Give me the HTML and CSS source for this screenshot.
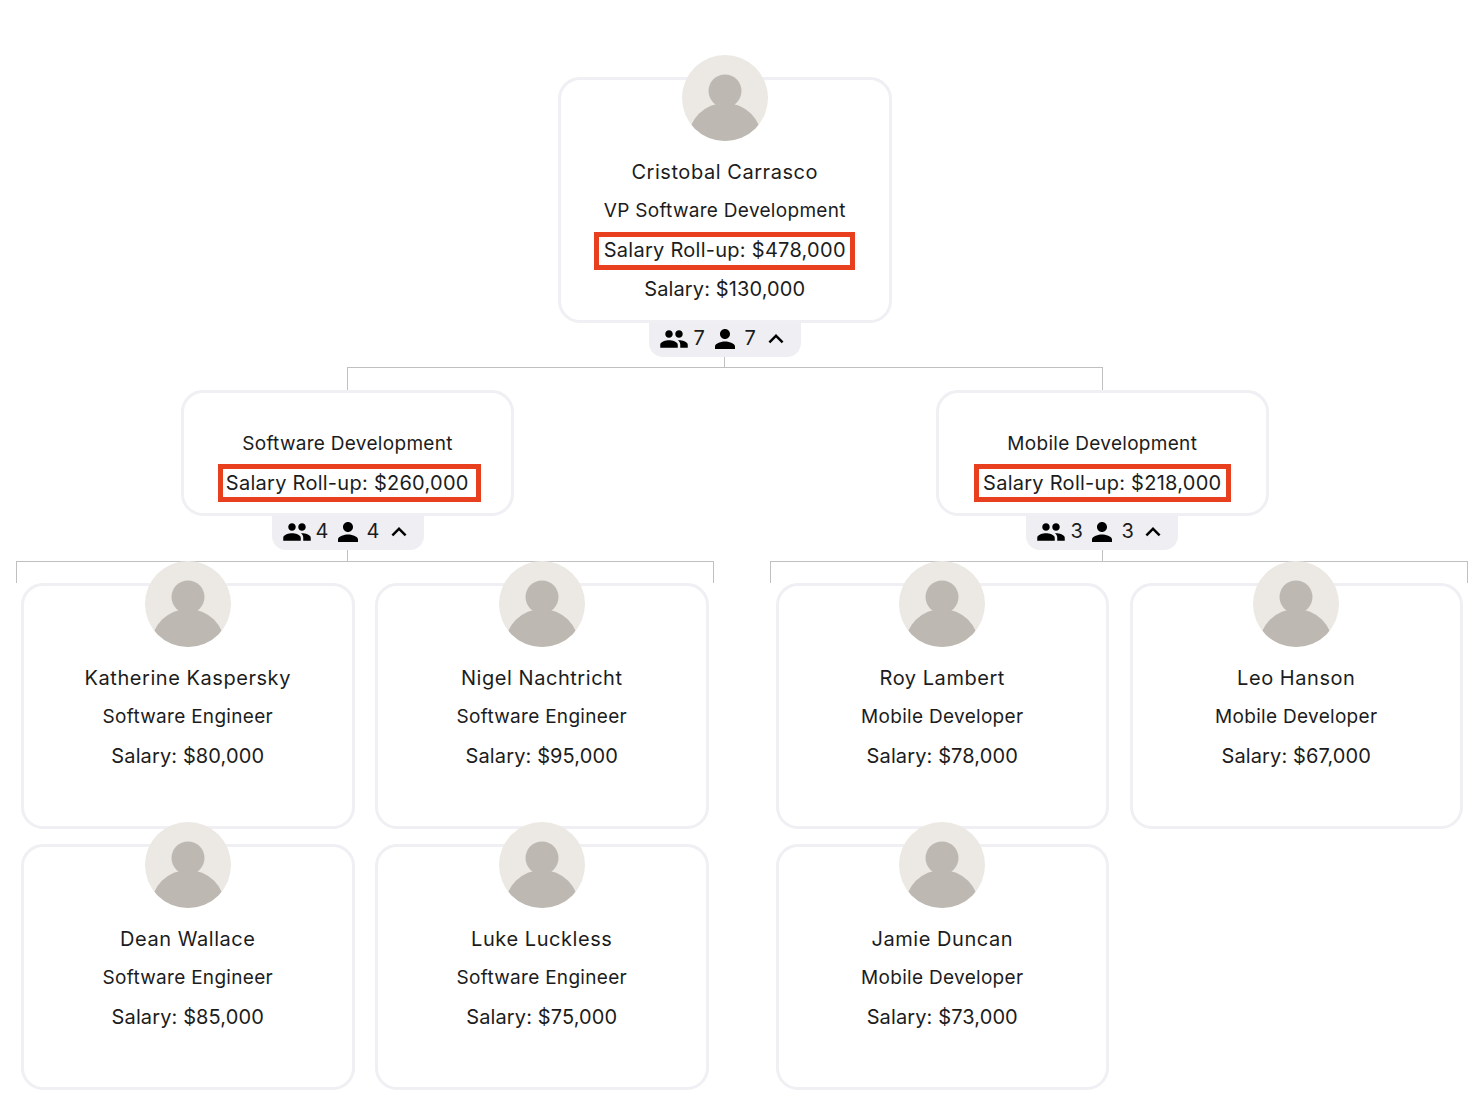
FILE: index.html
```html
<!DOCTYPE html>
<html lang="en">
<head>
<meta charset="utf-8">
<title>Org chart</title>
<link rel="stylesheet" href="styles.css">
</head>
<body>
<svg class="defs" width="0" height="0" aria-hidden="true">
  <symbol id="avatar" viewBox="0 0 86 86">
    <circle cx="43" cy="43" r="43" fill="#ece9e4"/>
    <clipPath id="avatar-clip"><circle cx="43" cy="43" r="43"/></clipPath>
    <g clip-path="url(#avatar-clip)" fill="#bdb9b2">
      <circle cx="43" cy="36" r="16.5"/>
      <circle cx="43" cy="85" r="37"/>
    </g>
  </symbol>
  <symbol id="group" viewBox="0 0 24 24"><path d="M16 11c1.66 0 2.99-1.34 2.99-3S17.66 5 16 5c-1.66 0-3 1.34-3 3s1.34 3 3 3zm-8 0c1.66 0 2.99-1.34 2.99-3S9.66 5 8 5C6.34 5 5 6.34 5 8s1.34 3 3 3zm0 2c-2.33 0-7 1.17-7 3.5V19h14v-2.5c0-2.33-4.67-3.5-7-3.5zm8 0c-.29 0-.62.02-.97.05 1.16.84 1.97 1.97 1.97 3.45V19h6v-2.5c0-2.33-4.67-3.5-7-3.5z"/></symbol>
  <symbol id="person" viewBox="0 0 24 24"><path d="M12 12c2.21 0 4-1.79 4-4s-1.79-4-4-4-4 1.79-4 4 1.79 4 4 4zm0 2c-2.67 0-8 1.34-8 4v2h16v-2c0-2.66-5.33-4-8-4z"/></symbol>
  <symbol id="chevron" viewBox="0 0 24 24"><path d="M12 8l-6 6 1.41 1.41L12 10.83l4.59 4.58L18 14z"/></symbol>
</svg>

<main class="chart">
  <section class="node node-root">
    <article class="card card-person">
      <svg class="avatar"><use href="#avatar"/></svg>
      <div class="lines">
        <div class="name">Cristobal Carrasco</div>
        <div class="role">VP Software Development</div>
        <div class="rollup">Salary Roll-up: $478,000</div>
        <div class="salary">Salary: $130,000</div>
      </div>
    </article>
    <div class="pill">
      <svg class="icon"><use href="#group"/></svg><span class="count">7</span>
      <svg class="icon"><use href="#person"/></svg><span class="count">7</span>
      <svg class="icon"><use href="#chevron"/></svg>
    </div>
    <div class="stem stem-root"></div>
  </section>
  <div class="bracket bracket-root"></div>

  <div class="branches">
    <section class="branch">
      <div class="node">
        <article class="card card-dept">
          <div class="lines">
            <div class="role">Software Development</div>
            <div class="rollup rollup-offset">Salary Roll-up: $260,000</div>
          </div>
        </article>
        <div class="pill">
          <svg class="icon"><use href="#group"/></svg><span class="count">4</span>
          <svg class="icon"><use href="#person"/></svg><span class="count">4</span>
          <svg class="icon"><use href="#chevron"/></svg>
        </div>
        <div class="stem"></div>
      </div>
      <div class="bracket"></div>
      <div class="team">
        <article class="card card-person">
          <svg class="avatar"><use href="#avatar"/></svg>
          <div class="lines">
            <div class="name">Katherine Kaspersky</div>
            <div class="role">Software Engineer</div>
            <div class="salary">Salary: $80,000</div>
          </div>
        </article>
        <article class="card card-person">
          <svg class="avatar"><use href="#avatar"/></svg>
          <div class="lines">
            <div class="name">Nigel Nachtricht</div>
            <div class="role">Software Engineer</div>
            <div class="salary">Salary: $95,000</div>
          </div>
        </article>
        <article class="card card-person">
          <svg class="avatar"><use href="#avatar"/></svg>
          <div class="lines">
            <div class="name">Dean Wallace</div>
            <div class="role">Software Engineer</div>
            <div class="salary">Salary: $85,000</div>
          </div>
        </article>
        <article class="card card-person">
          <svg class="avatar"><use href="#avatar"/></svg>
          <div class="lines">
            <div class="name">Luke Luckless</div>
            <div class="role">Software Engineer</div>
            <div class="salary">Salary: $75,000</div>
          </div>
        </article>
      </div>
    </section>

    <section class="branch">
      <div class="node">
        <article class="card card-dept">
          <div class="lines">
            <div class="role">Mobile Development</div>
            <div class="rollup">Salary Roll-up: $218,000</div>
          </div>
        </article>
        <div class="pill">
          <svg class="icon"><use href="#group"/></svg><span class="count">3</span>
          <svg class="icon"><use href="#person"/></svg><span class="count">3</span>
          <svg class="icon"><use href="#chevron"/></svg>
        </div>
        <div class="stem"></div>
      </div>
      <div class="bracket"></div>
      <div class="team team-right">
        <article class="card card-person">
          <svg class="avatar"><use href="#avatar"/></svg>
          <div class="lines">
            <div class="name">Roy Lambert</div>
            <div class="role">Mobile Developer</div>
            <div class="salary">Salary: $78,000</div>
          </div>
        </article>
        <article class="card card-person">
          <svg class="avatar"><use href="#avatar"/></svg>
          <div class="lines">
            <div class="name">Leo Hanson</div>
            <div class="role">Mobile Developer</div>
            <div class="salary">Salary: $67,000</div>
          </div>
        </article>
        <article class="card card-person">
          <svg class="avatar"><use href="#avatar"/></svg>
          <div class="lines">
            <div class="name">Jamie Duncan</div>
            <div class="role">Mobile Developer</div>
            <div class="salary">Salary: $73,000</div>
          </div>
        </article>
      </div>
    </section>
  </div>
</main>
</body>
</html>
```

FILE: styles.css
```css
* { box-sizing: border-box; }

html, body { margin: 0; background: #fff; }

body {
  font-family: "Inter", "Noto Sans", sans-serif;
  color: #1c1c1c;
  overflow: hidden;
}

.defs { position: absolute; }

.chart {
  width: 1482px;
  height: 1114px;
  padding-top: 77px;
  display: flex;
  flex-direction: column;
}

.node {
  width: 333.5px;
  margin-left: 164.75px;
  display: flex;
  flex-direction: column;
  align-items: center;
}

.node-root { margin-left: 558px; }

.branch:last-child .node { margin-left: 165.5px; }

.card {
  width: 333.5px;
  border: 3px solid #efeff4;
  border-radius: 22px;
  background: #fff;
  display: flex;
  flex-direction: column;
  align-items: center;
}

.card-person { height: 246px; }
.card-dept { height: 126px; padding-top: 36px; }

.avatar {
  display: block;
  width: 86px;
  height: 86px;
  margin-top: -25px;
  margin-bottom: 16px;
  flex: none;
}

.lines {
  display: flex;
  flex-direction: column;
  align-items: center;
  gap: 9px;
}

.name, .salary, .rollup {
  font-size: 20px;
  line-height: 30px;
  height: 30px;
  white-space: nowrap;
}

.name { letter-spacing: 0.55px; }
.salary { letter-spacing: 0.12px; }

.role {
  font-size: 19px;
  line-height: 30px;
  height: 30px;
  letter-spacing: 0.3px;
  white-space: nowrap;
}

.rollup {
  height: 38px;
  line-height: 27px;
  letter-spacing: 0.27px;
  border: 5px solid #e8401f;
  padding: 0 4.5px;
  margin: -3px 0 -5px;
}

.card-dept .rollup {
  line-height: 28px;
  margin: -4px 0;
}

.card-dept .rollup-offset {
  padding: 0 7px 0 2.5px;
  margin-left: 4px;
}

.pill {
  width: 152px;
  height: 34px;
  padding: 0 10px 2px;
  background: #efeef3;
  border-radius: 0 0 14px 14px;
  display: flex;
  align-items: center;
  flex: none;
}

.icon {
  display: block;
  width: 30px;
  height: 30px;
  flex: none;
  fill: #000;
}

.count {
  width: 21px;
  padding-bottom: 2px;
  text-align: center;
  font-size: 20px;
  line-height: 28px;
}

.stem {
  width: 1px;
  height: 11px;
  background: #c0c0c0;
}

.stem-root { height: 10px; }

.bracket {
  width: 698px;
  height: 22px;
  border: 1px solid #c0c0c0;
  border-bottom: 0;
  flex: none;
}

.bracket-root {
  width: 756px;
  margin-left: 347px;
  height: 23px;
}

.branches {
  display: flex;
  gap: 56px;
  padding-left: 16px;
}

.branch { width: 698px; }

.team {
  display: grid;
  grid-template-columns: 333.5px 333.5px;
  column-gap: 20.5px;
  row-gap: 14.6px;
  padding-left: 5px;
}

.team-right { padding-left: 5.5px; }
```
